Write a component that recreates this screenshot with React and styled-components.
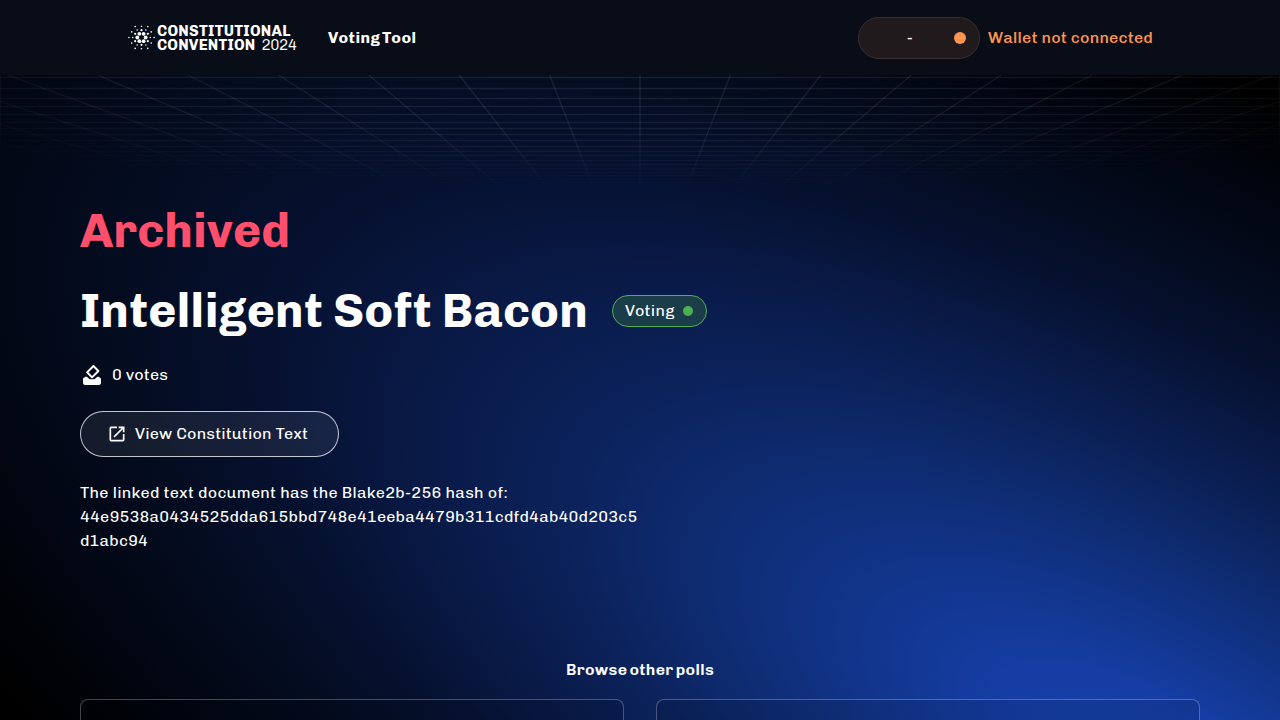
import React from 'react';
import styled, { createGlobalStyle } from 'styled-components';
import { MdOutlineOpenInNew } from 'react-icons/md';

const GlobalStyle = createGlobalStyle`
  *, *::before, *::after { box-sizing: border-box; }
  html, body { margin: 0; height: 100%; overflow: hidden; background: #000; }
  body { font-family: 'Chivo', 'Liberation Sans', Arial, sans-serif; font-size: 16px; line-height: 24px; letter-spacing: 0.15px; color: #fff; }
  h1, h2, p { margin: 0; }
`;

const Page = styled.div`
  position: relative;
  height: 720px;
  overflow: hidden;
  background: #000;
`;

const Backdrop = styled.svg`
  position: absolute;
  inset: 0;
  width: 100%;
  height: 100%;
`;

const Header = styled.header`
  position: relative;
  display: flex;
  align-items: center;
  justify-content: space-between;
  height: 75px;
  padding: 0 127px 0 128px;
  background: #080d17;
`;

const Group = styled.div`
  display: flex;
  align-items: center;
  gap: ${(p) => p.$gap}px;
`;

const Brand = styled.div`
  display: flex;
  align-items: center;
  width: 168px;
  gap: 2px;
`;

const BrandMark = styled.svg`
  flex: none;
  width: 27px;
  height: 27px;
`;

const BrandName = styled.div`
  padding-top: 2px;
  font-size: 15px;
  line-height: 13.5px;
  font-weight: 700;
  white-space: nowrap;
`;

const BrandLine = styled.div`
  letter-spacing: ${(p) => p.$tracking}px;
`;

const Year = styled.span`
  margin-left: 6px;
  font-weight: 300;
  letter-spacing: -0.4px;
`;

const Line = styled.span`
  white-space: nowrap;
  letter-spacing: ${(p) => p.$tracking || 0.15}px;
`;

const NavTitle = styled.span`
  font-weight: 700;
  letter-spacing: 0.42px;
  word-spacing: -2px;
`;

const WalletPill = styled.div`
  display: flex;
  align-items: center;
  justify-content: flex-end;
  gap: 41px;
  width: 122px;
  height: 42px;
  padding-right: 13px;
  border: 1px solid #352d2e;
  border-radius: 21px;
  background: #211a1c;
`;

const Dot = styled.span`
  width: ${(p) => p.$size}px;
  height: ${(p) => p.$size}px;
  border-radius: 50%;
  background: ${(p) => p.$color};
`;

const WalletStatus = styled.span`
  color: #fb9450;
  font-weight: 500;
  letter-spacing: 0.2px;
`;

const Main = styled.main`
  position: relative;
  display: flex;
  flex-direction: column;
  align-items: flex-start;
  padding: 128px 80px 0;
`;

const Heading = styled.h1`
  font-size: 48px;
  line-height: 56px;
  font-weight: 700;
  letter-spacing: ${(p) => p.$tracking || 0}px;
  color: ${(p) => p.$color || '#fff'};
`;

const TitleRow = styled.div`
  display: flex;
  align-items: center;
  gap: 24px;
  margin-top: 24px;
`;

const Chip = styled.div`
  display: flex;
  align-items: center;
  justify-content: space-between;
  width: 95px;
  height: 32px;
  padding: 0 13px 0 12px;
  border: 1px solid #4caf50;
  border-radius: 16px;
  background: #1b3d49;
`;

const Votes = styled.div`
  display: flex;
  align-items: center;
  gap: 8px;
  height: 24px;
  margin-top: 24px;
`;

const LinkButton = styled.button`
  display: flex;
  align-items: center;
  gap: 8px;
  width: 259px;
  height: 46px;
  margin-top: 24px;
  padding: 0 0 0 26px;
  border: 1px solid rgba(255, 255, 255, 0.75);
  border-radius: 23px;
  background: rgba(255, 255, 255, 0.07);
  color: #fff;
  font: inherit;
  letter-spacing: inherit;
`;

const HashNote = styled.p`
  display: flex;
  flex-direction: column;
  margin-top: 24px;
`;

const PollsTitle = styled.h2`
  align-self: center;
  margin-top: 105px;
  font-size: 16px;
  line-height: 24px;
  font-weight: 600;
  letter-spacing: 0.32px;
  word-spacing: -1.6px;
`;

const PollGrid = styled.div`
  display: grid;
  grid-template-columns: 1fr 1fr;
  gap: 32px;
  width: 100%;
  margin-top: 17px;
`;

const PollCard = styled.div`
  height: 160px;
  border: 1px solid rgba(255, 255, 255, 0.26);
  border-radius: 8px;
  background: rgba(0, 0, 0, 0.1);
`;

const rows = [77.5, 88.5, 98.5, 106.5, 114.5, 122.5, 128.5, 134.5, 140.5, 146.5, 151.5, 155.5, 160.5, 164.5, 168.5, 172.5, 175.5, 179.5, 182.5, 185.5];
const rays = Array.from({ length: 41 }, (_, i) => i - 20);

function Background() {
  return (
    <Backdrop viewBox="0 0 1280 720" aria-hidden="true">
      <defs>
        <radialGradient id="glow" gradientUnits="userSpaceOnUse" cx="0" cy="0" r="1"
          gradientTransform="translate(1170 785) rotate(30) scale(1640 655)">
          <stop offset="0" stopColor="#1743b0" />
          <stop offset="0.12" stopColor="#153da3" />
          <stop offset="0.2" stopColor="#12368f" />
          <stop offset="0.34" stopColor="#0e2a6d" />
          <stop offset="0.42" stopColor="#0b2159" />
          <stop offset="0.52" stopColor="#091945" />
          <stop offset="0.62" stopColor="#061130" />
          <stop offset="0.72" stopColor="#040c20" />
          <stop offset="0.86" stopColor="#020510" />
          <stop offset="1" stopColor="#000000" />
        </radialGradient>
        <radialGradient id="spot" gradientUnits="userSpaceOnUse" cx="0" cy="0" r="1"
          gradientTransform="translate(640 75) scale(900 116)">
          <stop offset="0" stopColor="#fff" />
          <stop offset="0.5" stopColor="#fff" stopOpacity="0.8" />
          <stop offset="1" stopColor="#fff" stopOpacity="0" />
        </radialGradient>
        <mask id="gridMask" maskUnits="userSpaceOnUse" x="0" y="75" width="1280" height="120">
          <rect x="0" y="75" width="1280" height="120" fill="url(#spot)" />
        </mask>
      </defs>
      <rect width="1280" height="720" fill="url(#glow)" />
      <g mask="url(#gridMask)" stroke="#fff" strokeOpacity="0.085" strokeWidth="1.4">
        {rows.map((y) => <line key={y} x1="0" x2="1280" y1={y} y2={y} />)}
        {rays.map((k) => <line key={k} x1={640 + 90.4 * k} y1="75" x2={640 + 43.4 * k} y2="195" />)}
        <line x1="0.5" x2="0.5" y1="75" y2="195" />
        <line x1="1279.5" x2="1279.5" y1="75" y2="195" />
      </g>
    </Backdrop>
  );
}

const rings = [
  { r: 4.2, size: 1.9, n: 6, turn: 0 },
  { r: 7.3, size: 1.1, n: 6, turn: 30 },
  { r: 8.8, size: 0.75, n: 6, turn: 0 },
  { r: 11.2, size: 0.8, n: 6, turn: 30 },
  { r: 12.6, size: 0.8, n: 6, turn: 0 },
];

function Logo() {
  return (
    <Brand>
      <BrandMark viewBox="-13.5 -13.5 27 27" fill="#fff">
        {rings.flatMap(({ r, size, n, turn }, ring) =>
          Array.from({ length: n }, (_, i) => {
            const a = ((turn + (360 / n) * i) * Math.PI) / 180;
            return <circle key={`${ring}-${i}`} cx={r * Math.cos(a)} cy={r * Math.sin(a)} r={size} />;
          })
        )}
      </BrandMark>
      <BrandName>
        <BrandLine $tracking={0.28}>CONSTITUTIONAL</BrandLine>
        <BrandLine $tracking={0.2}>CONVENTION<Year>2024</Year></BrandLine>
      </BrandName>
    </Brand>
  );
}

function BallotIcon() {
  return (
    <svg width="24" height="24" viewBox="0 0 24 24" fill="#fff" aria-hidden="true">
      <path d="M17 7.95l-4.95 4.95-3.54-3.54 4.95-4.95L17 7.95zm-4.24-5.66L6.39 8.66c-.39.39-.39 1.02 0 1.41l4.95 4.95c.39.39 1.02.39 1.41 0l6.36-6.36c.39-.39.39-1.02 0-1.41L14.16 2.3c-.38-.4-1.01-.4-1.4-.01z" />
      <path d="M5.3 13.7h1.6l2.9 2.5h4.7l2.9-2.5h1.3L21 15.6V20c0 1.1-.9 2-2 2H5c-1.1 0-2-.9-2-2v-4.4z" />
    </svg>
  );
}

export default function App() {
  return (
    <>
      <GlobalStyle />
      <Page>
        <Background />
        <Header>
          <Group $gap={32}>
            <Logo />
            <NavTitle>Voting Tool</NavTitle>
          </Group>
          <Group $gap={8}>
            <WalletPill>
              <span>-</span>
              <Dot $size={12} $color="#fb9450" />
            </WalletPill>
            <WalletStatus>Wallet not connected</WalletStatus>
          </Group>
        </Header>
        <Main>
          <Heading $color="#ff4f6d">Archived</Heading>
          <TitleRow>
            <Heading $tracking={0.12}>Intelligent Soft Bacon</Heading>
            <Chip>
              <Line $tracking={0.3}>Voting</Line>
              <Dot $size={10} $color="#4caf50" />
            </Chip>
          </TitleRow>
          <Votes>
            <BallotIcon />
            <Line>0 votes</Line>
          </Votes>
          <LinkButton>
            <MdOutlineOpenInNew size={20} />
            <Line>View Constitution Text</Line>
          </LinkButton>
          <HashNote>
            <Line $tracking={0.26}>The linked text document has the Blake2b-256 hash of:</Line>
            <Line $tracking={0.19}>44e9538a0434525dda615bbd748e41eeba4479b311cdfd4ab40d203c5</Line>
            <Line>d1abc94</Line>
          </HashNote>
          <PollsTitle>Browse other polls</PollsTitle>
          <PollGrid>
            <PollCard />
            <PollCard />
          </PollGrid>
        </Main>
      </Page>
    </>
  );
}
